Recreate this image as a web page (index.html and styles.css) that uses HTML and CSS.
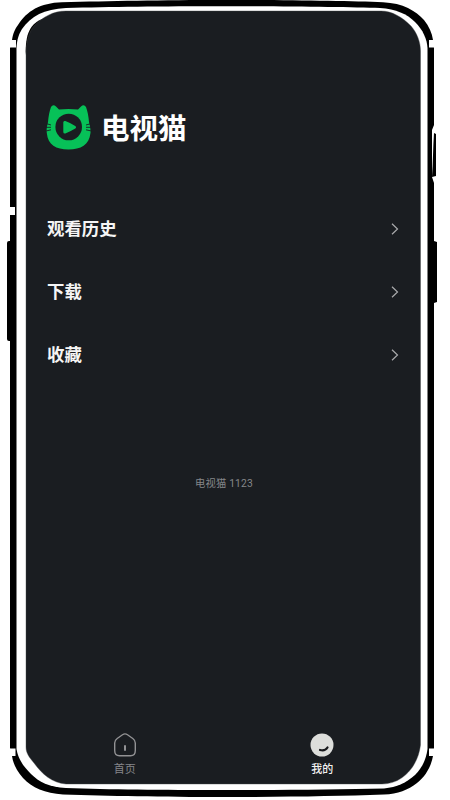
FILE: index.html
```
<!DOCTYPE html>
<html lang="zh-CN">

<head>
	<meta charset="UTF-8">
	<title>电视猫</title>
	<link rel="stylesheet" href="styles.css">
</head>

<body>

	<div class="phone">
		<svg class="frame" width="450" height="800" viewBox="0 0 450 800">
			<!-- outer shell -->
			<path fill="#000" d="M10 48 L12 40 C13 33 15 29 18 25 C27 11 40 3 62 2.300 C110 1 160 0 225 0 C290 0 350 1 383 2.200 C403 3 416 11 424 20 C429 26 432 33 433 40 L434 48 V748 L433 756 C431 767 425 777 417 783 C408 790 398 794 384 794.500 C340 796 290 797 225 797 C160 797 110 796 63 794.500 C45 793 32 788 23 778 C16 770 13 763 12 756 L10 748 Z" />
			<path fill="#fff" d="M16.500 48 C17 39 19 34 22 29 C31 16 44 9 66 8 C110 6.700 160 6.200 225 6.200 C290 6.200 350 7 380 8 C396 9 407 14 415 22 C423 30 427 39 427.500 48 V749 C426 760 422 768 415 775 C406 783 397 787 384 788.500 C340 789.500 290 790 225 790 C160 790 110 789.500 66 788 C49 787 39 782 31 774 C22 765 18 758 16.500 749 V48 Z" />
			<path fill="#000" d="M25.700 52 C25.500 31 32 22 46 17.500 L40 40 L26.500 60 Z" />
			<!-- antenna gaps -->
			<path fill="#fff" d="M10 40 H16 V47.500 H10 Z M10 207 H15 V215 H10 Z M10 748.500 H15.500 V756 H10 Z M429 40 H435 V47.500 H429 Z M429 748.500 H435 V756 H429 Z" />
			<!-- side keys -->
			<path fill="#000" d="M10 241 H9 Q7 241 7 243 V339 Q7 341 9 341 H10 Z M434 241 L437 242 V302 L434 303 Z" />
			<path fill="#fff" d="M434 125 L432 130 V177 L434 183 H438 V125 Z" />
			<path fill="#000" d="M434 133 L436 134 V176 L432 177 C433 163 433 147 434 133 Z" />
			<!-- display -->
			<path fill="#1a1d21" stroke="#44474a" stroke-width=".4" d="M26 51 C27 40 29 32 34 26 C43 17 53 11 66 11 H381 C392 11 402 17 411 26 C417 33 420.500 42 420.500 51 V745 C418 766 403 784 382 784 H66 C52 783 42 774 34 763 C29 757 26 753 26 747 Z" />
		</svg>

		<div class="screen">
			<header class="brand">
				<svg class="logo" width="46" height="46" viewBox="0 0 46 46">
					<path fill="#07c158" d="M2 17 C2.500 11 3.500 6 5 2 Q7-1 10 1.500 L13 4.500 Q22.500 3.300 32 4.500 L35 1.500 Q38-1 40 2 C41.500 6 42.500 11 43 17 Q45 24 44.500 28 C43 40 35 44.500 22.500 44.500 C10 44.500 2 40 .8 28 Q0 24 2 17 Z" />
					<circle cx="22.700" cy="22" r="13.300" fill="#1a1d21" />
					<path fill="#07c158" stroke="#07c158" stroke-width="3" stroke-linejoin="round" d="M18.800 17.500 V27 Q24 25 28.500 22.200 Q24 19.500 18.800 17.500 Z" />
					<path stroke="#1a1d21" stroke-width=".9" fill="none" d="M0 18.500 L5 20 M0 22.300 H5 M0 26 L5 24.800 M45.500 18.500 L40 20 M45.500 22.300 H40 M45.500 26 L40 24.800" />
				</svg>
				<h1 class="brand-name">电视猫</h1>
			</header>

			<ul class="menu">
				<li class="menu-item">
					<span>观看历史</span>
					<svg class="arrow" width="8" height="12" viewBox="0 0 8 12"><path d="M1 .7 L6.500 6 L1 11.300" /></svg>
				</li>
				<li class="menu-item">
					<span>下载</span>
					<svg class="arrow" width="8" height="12" viewBox="0 0 8 12"><path d="M1 .7 L6.500 6 L1 11.300" /></svg>
				</li>
				<li class="menu-item">
					<span>收藏</span>
					<svg class="arrow" width="8" height="12" viewBox="0 0 8 12"><path d="M1 .7 L6.500 6 L1 11.300" /></svg>
				</li>
			</ul>

			<p class="version">电视猫 1123</p>

			<nav class="tabs">
				<a class="tab">
					<svg width="24" height="24" viewBox="0 0 24 24" fill="none" stroke="#929294">
						<path stroke-width="1.400" d="M4.200 5.500 L9.500 1.800 Q12 0 14.500 1.800 L19.800 5.500 Q22.300 7.300 22.300 10 V17.500 Q22.300 22.700 17.500 22.700 H6.500 Q1.700 22.700 1.700 17.500 V10 Q1.700 7.300 4.200 5.500 Z" />
						<path stroke-width="2" stroke-linecap="round" d="M12 13 V17" />
					</svg>
					<span>首页</span>
				</a>
				<a class="tab tab-active">
					<svg width="24" height="24" viewBox="0 0 24 24">
						<circle cx="12" cy="12" r="11.500" fill="#dddedb" />
						<path d="M10 17 Q15 18.500 17.500 14.500" fill="none" stroke="#17181b" stroke-width="2.200" stroke-linecap="round" />
					</svg>
					<span>我的</span>
				</a>
			</nav>
		</div>
	</div>

</body>

</html>
```
FILE: styles.css
```
body {
	margin: 0;
	background: #fff;
	font-family: "Noto Sans CJK SC", sans-serif;
}

.phone {
	position: relative;
	width: 450px;
	height: 800px;
	overflow: hidden;
}

/* device shell lies under the app content */
.frame {
	position: absolute;
	top: 0;
	left: 0;
}

.screen {
	position: relative;
	box-sizing: border-box;
	width: 395px;
	height: 773px;
	margin: 11px 0 0 26px;
	padding-top: 94px;
	display: flex;
	flex-direction: column;
}

.brand {
	display: flex;
	align-items: center;
	gap: 9px;
	height: 46px;
	padding-left: 20px;
}

.brand-name {
	margin: 0;
	color: #fff;
	font-size: 28.500px;
	line-height: 46px;
	padding-bottom: 2px;
	font-weight: 700;
}

.menu {
	list-style: none;
	margin: 46px 0 0;
	padding: 0 22px 0 21px;
}

.menu-item {
	display: flex;
	align-items: center;
	justify-content: space-between;
	height: 63px;
	color: #f5f5f5;
	font-size: 17.400px;
	font-weight: 700;
}

.menu-item span {
	padding-bottom: 2px;
}

.arrow path {
	fill: none;
	stroke: #a9aaac;
	stroke-width: 1.200;
}

.version {
	margin: 90px 0 0;
	padding-left: 1px;
	color: #85878a;
	font-family: Roboto, "Noto Sans CJK SC", sans-serif;
	font-size: 10.300px;
	line-height: 16px;
	letter-spacing: 0.15px;
	text-align: center;
}

.tabs {
	display: flex;
	height: 51px;
	margin-top: auto;
}

.tab {
	display: flex;
	flex: 1;
	flex-direction: column;
	align-items: center;
	gap: 3px;
	color: #85868a;
	font-size: 11px;
	line-height: 16px;
}

.tab-active {
	color: #f2f2f2;
	font-weight: 500;
}
```
